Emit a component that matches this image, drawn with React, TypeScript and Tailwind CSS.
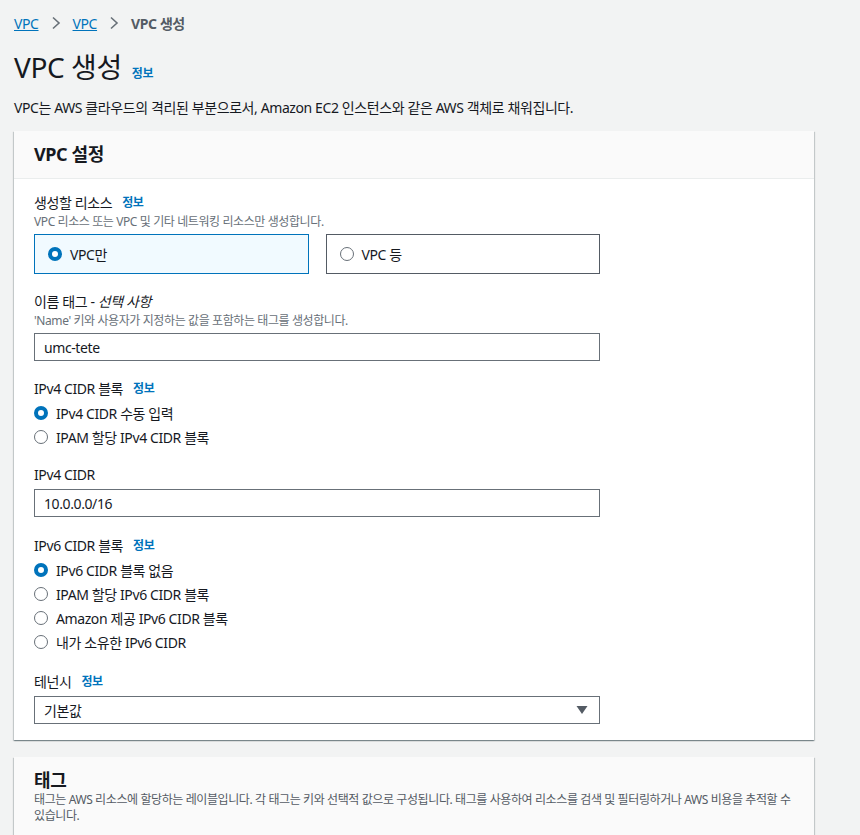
import { useState } from "react";

const font = "font-['Noto_Sans','Noto_Sans_CJK_KR',sans-serif] tracking-[-0.025em]";

function InfoLink() {
  return (
    <a href="#" className="ml-[10px] text-[12px] font-bold text-[#0073bb]">
      정보
    </a>
  );
}

function Radio({ checked }: { checked: boolean }) {
  return checked ? (
    <span className="inline-block h-[14px] w-[14px] shrink-0 rounded-full border-[4px] border-[#0073bb] bg-white" />
  ) : (
    <span className="inline-block h-[14px] w-[14px] shrink-0 rounded-full border border-[#687078] bg-white" />
  );
}

function RadioGroup({
  options,
  value,
  onChange,
}: {
  options: string[];
  value: number;
  onChange: (i: number) => void;
}) {
  return (
    <div className="mt-[1px] flex flex-col">
      {options.map((opt, i) => (
        <label
          key={opt}
          onClick={() => onChange(i)}
          className="flex h-[24px] cursor-pointer items-center gap-[8px] text-[14px] text-[#16191f]"
        >
          <Radio checked={value === i} />
          <span>{opt}</span>
        </label>
      ))}
    </div>
  );
}

const cardShadow =
  "shadow-[0_1px_1px_0_rgba(0,28,36,0.3),1px_1px_1px_0_rgba(0,28,36,0.15),-1px_1px_1px_0_rgba(0,28,36,0.15)]";

export default function App() {
  const [resource, setResource] = useState(0);
  const [ipv4, setIpv4] = useState(0);
  const [ipv6, setIpv6] = useState(0);

  return (
    <div className={`${font} min-h-[835px] bg-[#f2f3f3] px-[14px] pt-[13px] text-[#16191f]`}>
      {/* breadcrumb */}
      <nav className="flex h-[20px] items-center text-[14px]">
        <a href="#" className="text-[#0073bb] underline">VPC</a>
        <svg className="mx-[12px]" width="10" height="14" viewBox="0 0 10 14">
          <path d="M2 1.5 L8 7 L2 12.5" fill="none" stroke="#687078" strokeWidth="1.6" />
        </svg>
        <a href="#" className="text-[#0073bb] underline">VPC</a>
        <svg className="mx-[12px]" width="10" height="14" viewBox="0 0 10 14">
          <path d="M2 1.5 L8 7 L2 12.5" fill="none" stroke="#687078" strokeWidth="1.6" />
        </svg>
        <span className="font-bold text-[#545b64]">VPC 생성</span>
      </nav>

      {/* title */}
      <div className="mt-[17px] flex items-baseline">
        <h1 className="text-[28px] leading-[34px] font-normal">VPC 생성</h1>
        <a href="#" className="ml-[10px] text-[12px] font-bold text-[#0073bb]">정보</a>
      </div>
      <p className="mt-[14px] text-[14px] leading-[20px]">
        VPC는 AWS 클라우드의 격리된 부분으로서, Amazon EC2 인스턴스와 같은 AWS 객체로 채워집니다.
      </p>

      {/* VPC settings card */}
      <section className={`mt-[13px] w-[800px] bg-white ${cardShadow}`}>
        <div className="flex h-[48px] items-center border-b border-[#eaeded] bg-[#fafafa] px-[20px]">
          <h2 className="text-[18px] font-bold">VPC 설정</h2>
        </div>
        <div className="px-[20px] pt-[13px] pb-[16px]">
          <div className="flex items-center text-[14px] leading-[22px]">
            생성할 리소스
            <InfoLink />
          </div>
          <p className="text-[12px] leading-[16px] text-[#687078]">
            VPC 리소스 또는 VPC 및 기타 네트워킹 리소스만 생성합니다.
          </p>
          <div className="mt-[4px] flex w-[566px] gap-[17px]">
            <button
              onClick={() => setResource(0)}
              className={`flex h-[40px] flex-1 items-center gap-[8px] px-[13px] text-[14px] ${
                resource === 0 ? "border border-[#0073bb] bg-[#f1faff]" : "border border-[#545b64] bg-white"
              }`}
            >
              <Radio checked={resource === 0} />
              VPC만
            </button>
            <button
              onClick={() => setResource(1)}
              className={`flex h-[40px] flex-1 items-center gap-[8px] px-[13px] text-[14px] ${
                resource === 1 ? "border border-[#0073bb] bg-[#f1faff]" : "border border-[#545b64] bg-white"
              }`}
            >
              <Radio checked={resource === 1} />
              VPC 등
            </button>
          </div>

          <div className="mt-[17px] text-[14px] leading-[22px]">
            이름 태그 - <i>선택 사항</i>
          </div>
          <p className="text-[12px] leading-[16px] text-[#687078]">
            'Name' 키와 사용자가 지정하는 값을 포함하는 태그를 생성합니다.
          </p>
          <input
            defaultValue="umc-tete"
            className="mt-[4px] block h-[28px] w-[566px] border border-[#687078] px-[9px] text-[14px] outline-none"
          />

          <div className="mt-[17px] flex items-center text-[14px] leading-[22px]">
            IPv4 CIDR 블록
            <InfoLink />
          </div>
          <RadioGroup
            options={["IPv4 CIDR 수동 입력", "IPAM 할당 IPv4 CIDR 블록"]}
            value={ipv4}
            onChange={setIpv4}
          />

          <div className="mt-[15px] text-[14px] leading-[22px]">IPv4 CIDR</div>
          <input
            defaultValue="10.0.0.0/16"
            className="mt-[3px] block h-[28px] w-[566px] border border-[#687078] px-[9px] text-[14px] outline-none"
          />

          <div className="mt-[18px] flex items-center text-[14px] leading-[22px]">
            IPv6 CIDR 블록
            <InfoLink />
          </div>
          <RadioGroup
            options={[
              "IPv6 CIDR 블록 없음",
              "IPAM 할당 IPv6 CIDR 블록",
              "Amazon 제공 IPv6 CIDR 블록",
              "내가 소유한 IPv6 CIDR",
            ]}
            value={ipv6}
            onChange={setIpv6}
          />

          <div className="mt-[17px] flex items-center text-[14px] leading-[22px]">
            테넌시
            <InfoLink />
          </div>
          <div className="mt-[3px] flex h-[28px] w-[566px] items-center justify-between border border-[#687078] pr-[11px] pl-[9px] text-[14px]">
            <span>기본값</span>
            <svg width="12" height="10" viewBox="0 0 12 10">
              <path d="M0.5 1 L11.5 1 L6 9 Z" fill="#545b64" />
            </svg>
          </div>
        </div>
      </section>

      {/* Tags card */}
      <section className={`mt-[17px] w-[800px] bg-[#fafafa] px-[20px] pt-[12px] pb-[20px] ${cardShadow}`}>
        <h2 className="text-[18px] leading-[22px] font-bold">태그</h2>
        <p className="mt-[1px] text-[12px] leading-[16px] text-[#545b64]">
          태그는 AWS 리소스에 할당하는 레이블입니다. 각 태그는 키와 선택적 값으로 구성됩니다. 태그를 사용하여 리소스를 검색 및 필터링하거나 AWS 비용을 추적할 수
          있습니다.
        </p>
      </section>
    </div>
  );
}
